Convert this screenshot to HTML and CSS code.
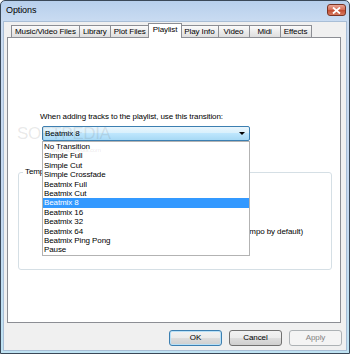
FILE: index.html
```html
<!DOCTYPE html>
<html>
<head>
<meta charset="utf-8">
<link rel="stylesheet" href="styles.css">
</head>
<body>
<div class="window">
  <div class="titlebar">
    <span class="title">Options</span>
    <span class="close"><svg width="9" height="7" viewBox="0 0 9 7"><path d="M1 0.5 L8 6.5 M8 0.5 L1 6.5" stroke="#fff" stroke-width="1.8"/></svg></span>
  </div>
  <div class="client">
    <div class="tabs">
      <div class="tab">Music/Video Files</div>
      <div class="tab">Library</div>
      <div class="tab">Plot Files</div>
      <div class="tab active">Playlist</div>
      <div class="tab">Play Info</div>
      <div class="tab">Video</div>
      <div class="tab">Midi</div>
      <div class="tab">Effects</div>
    </div>
    <div class="panel">
      <p class="prompt">When adding tracks to the playlist, use this transition:</p>
      <div class="combo"><span class="combo-value">Beatmix 8</span><span class="arrow"></span></div>
      <fieldset class="group">
        <legend>Tempo</legend>
        <p class="group-line">Beatmix uses the track's tempo (original tempo by default)</p>
      </fieldset>
      <ul class="droplist">
        <li>No Transition</li>
        <li>Simple Full</li>
        <li>Simple Cut</li>
        <li>Simple Crossfade</li>
        <li>Beatmix Full</li>
        <li>Beatmix Cut</li>
        <li class="selected">Beatmix 8</li>
        <li>Beatmix 16</li>
        <li>Beatmix 32</li>
        <li>Beatmix 64</li>
        <li>Beatmix Ping Pong</li>
        <li>Pause</li>
      </ul>
      <div class="watermark"><span class="wm-big">SOFTPEDIA</span><span class="wm-small">www.softpedia.com</span></div>
    </div>
    <div class="buttons">
      <div class="btn default">OK</div>
      <div class="btn">Cancel</div>
      <div class="btn disabled">Apply</div>
    </div>
  </div>
</div>
</body>
</html>
```
FILE: styles.css
```css
html, body {
  margin: 0;
  padding: 0;
  background: #ffffff;
}
body {
  font-family: "Liberation Sans", Arial, sans-serif;
  font-size: 8px;
  letter-spacing: -0.1px;
  color: #000;
}
.window {
  width: 350px;
  height: 354px;
  box-sizing: border-box;
  border: 1px solid #3a4858;
  border-radius: 5px 5px 0 0;
  background: linear-gradient(#b7cfec, #cadcf2 21px, #c4d8f0 60%, #bfe3f3);
  display: flex;
  flex-direction: column;
  overflow: hidden;
}
.titlebar {
  height: 21px;
  display: flex;
  align-items: flex-start;
  justify-content: space-between;
  padding: 0 3px 0 5px;
}
.title {
  font-size: 9px;
  line-height: 19px;
}
.close {
  margin-top: 3px;
  width: 19px;
  height: 12px;
  box-sizing: border-box;
  border: 1px solid #7a3424;
  border-radius: 3px;
  background: linear-gradient(#e9a596, #d46a52 50%, #c24a30 51%, #d77a5f);
  display: flex;
  align-items: center;
  justify-content: center;
}
.client {
  flex: 1;
  margin: 0 3px 3px;
  background: #f0f0f0;
  padding: 1px 4px 4px 3px;
  display: flex;
  flex-direction: column;
  box-shadow: 0 0 0 1px #a9bed6;
}
.tabs {
  display: flex;
  align-items: flex-end;
  height: 15px;
  padding-left: 4px;
  margin-bottom: -1px;
  position: relative;
  z-index: 1;
}
.tab {
  box-sizing: border-box;
  height: 12px;
  margin-bottom: 1px;
  padding: 0 3px;
  min-width: 32px;
  text-align: center;
  line-height: 11px;
  border: 1px solid #8c8e94;
  border-bottom: none;
  margin-left: -1px;
  background: linear-gradient(#fbfbfb, #ececec 50%, #dedede);
  white-space: nowrap;
}
.tab:first-child {
  margin-left: 0;
}
.tab.active {
  height: 15px;
  margin-bottom: 0;
  margin-left: -2px;
  margin-right: -1px;
  padding: 0 4px;
  background: #ffffff;
  line-height: 11px;
  position: relative;
}
.panel {
  flex: 1;
  position: relative;
  background: #ffffff;
  border: 1px solid #8c8e94;
  margin-right: 1px;
  overflow: hidden;
}
.prompt {
  margin: 74px 0 0 32px;
  line-height: 10px;
}
.combo {
  margin: 4px 0 0 34px;
  width: 208px;
  height: 15px;
  box-sizing: border-box;
  border: 1px solid #3c7fb1;
  border-radius: 2px;
  background: linear-gradient(#eaf6fd, #d9f0fc 45%, #bee6fd 50%, #a7d9f5);
  display: flex;
  align-items: center;
  justify-content: space-between;
  padding: 0 4px 0 2px;
}
.combo-value {
  line-height: 11px;
}
.arrow {
  width: 0;
  height: 0;
  border-left: 3px solid transparent;
  border-right: 3px solid transparent;
  border-top: 3px solid #000;
}
.group {
  margin: 26px 0 0 10px;
  width: 314px;
  height: 103px;
  box-sizing: border-box;
  border: 1px solid #d5dfe5;
  border-radius: 3px;
  padding: 0;
}
.group legend {
  margin-left: 4px;
  padding: 0 2px;
  line-height: 10px;
}
.group-line {
  margin: 50px 0 0;
  padding-right: 28px;
  text-align: right;
  line-height: 10px;
}
.droplist {
  position: absolute;
  top: 103px;
  left: 34px;
  width: 208px;
  box-sizing: border-box;
  margin: 0;
  padding: 0;
  list-style: none;
  background: #ffffff;
  border: 1px solid #b3b3b3;
  z-index: 2;
}
.droplist li {
  height: 9.42px;
  line-height: 9.42px;
  padding-left: 1px;
  white-space: nowrap;
}
.droplist li.selected {
  background: #3399ff;
  color: #ffffff;
}
.watermark {
  position: absolute;
  left: 9px;
  top: 87px;
  z-index: 3;
  display: flex;
  flex-direction: column;
  pointer-events: none;
  color: rgba(90, 90, 90, 0.14);
}
.wm-big {
  font-size: 17px;
  letter-spacing: -0.3px;
  line-height: 18px;
}
.wm-small {
  font-size: 6px;
  margin-left: 34px;
  margin-top: 4px;
}
.buttons {
  display: flex;
  justify-content: flex-end;
  gap: 7px;
  margin-top: 7px;
}
.btn {
  width: 53px;
  height: 16px;
  box-sizing: border-box;
  border: 1px solid #707070;
  border-radius: 3px;
  background: linear-gradient(#f2f2f2, #ebebeb 50%, #dddddd 51%, #cfcfcf);
  text-align: center;
  line-height: 14px;
}
.btn.default {
  border-color: #3c7fb1;
  box-shadow: inset 0 0 0 1px #b8e0f7;
}
.btn.disabled {
  border-color: #adb2b5;
  background: #f4f4f4;
  color: #838383;
}
```
